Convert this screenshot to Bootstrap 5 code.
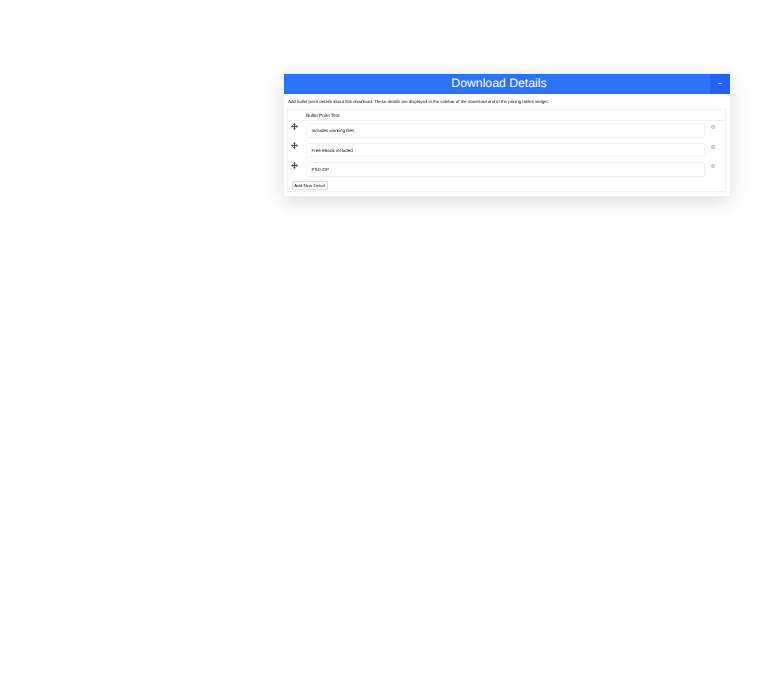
<!DOCTYPE html>
<html lang="en">
<head>
<meta charset="utf-8">
<title>Download Details</title>
<link href="https://cdn.jsdelivr.net/npm/bootstrap@5.3.0/dist/css/bootstrap.min.css" rel="stylesheet">
<style>
body { background:#fff; font-family:"Liberation Sans",Arial,sans-serif; color:#222; text-rendering:geometricPrecision; }
.dl-stage { padding:74px 0 0 284px; }
.dl-panel { width:446px; background:#fff; box-shadow:0 0 0 1px #f0f0f0, 0 5px 18px rgba(0,0,0,.15); }
.dl-head { height:20px; background:#2b73fb; color:#fff; }
.dl-title { font-size:12.25px; line-height:18px; padding-left:4px; }
.dl-toggle { width:20px; background:#2460f5; color:#fff; border:0; padding:0; font-size:8px; line-height:20px; border-radius:0; }
.dl-body { padding:5px 4px 4px 3px; filter:blur(.35px); }
.dl-note { font-size:4.37px; line-height:6px; margin:0 0 4px 1px; color:#111; }
.dl-table { border:1px solid #f1f1f1; padding-bottom:1px; }
.dl-th { font-size:4.7px; line-height:11px; padding-left:18px; border-bottom:1px solid #f1f1f1; height:11px; color:#111; }
.dl-row { height:19.5px; padding:2px 0 0 3px; }
.dl-grip { width:15px; flex:none; margin-top:-.5px; }
.dl-grip svg, .dl-x svg { display:block; }
.dl-input { width:399px; height:14.5px; border:1px solid #e9f1ff; border-radius:1.500px; font-size:4.5px; line-height:12px; padding:1.500px 4.500px 0; display:flex; align-items:center; color:#111; }
.dl-x { width:14px; flex:none; padding:2.300px 0 0 6px; }
.dl-add { font-size:4.4px; line-height:7px; width:36px; height:9px; padding:0; background:#f8f8f8; color:#222; border:1px solid #dcdcdc; border-radius:1px; margin:1.500px 0 0 3.500px; display:block; }
</style>
</head>
<body>
<div class="dl-stage min-vh-100">
<div class="dl-panel">
  <div class="dl-head d-flex justify-content-between">
    <div class="dl-title flex-grow-1 text-center">Download Details</div>
    <button class="dl-toggle btn" type="button">&minus;</button>
  </div>
  <div class="dl-body">
    <p class="dl-note">Add bullet point details about this download. These details are displayed in the sidebar of the download and in the pricing tables widget.</p>
    <div class="dl-table">
      <div class="dl-th">Bullet Point Text</div>
      <div class="dl-row d-flex">
        <span class="dl-grip"><svg width="7" height="7" viewBox="0 0 14 14"><path d="M7 0 10 3.200H8.200V5.800H10.800V4L14 7l-3.200 3V8.200H8.200v2.600H10L7 14l-3-3.200H5.800V8.200H3.200V10L0 7l3.200-3V5.800H5.800V3.200H4Z" fill="#45494d"/></svg></span>
        <div class="dl-input">Includes working files</div>
        <span class="dl-x"><svg width="4" height="4" viewBox="0 0 8 8"><circle cx="4" cy="4" r="4" fill="#bdbdbd"/><path d="M2.300 2.300l3.400 3.400M5.700 2.300 2.300 5.700" stroke="#fff"/></svg></span>
      </div>
      <div class="dl-row d-flex">
        <span class="dl-grip"><svg width="7" height="7" viewBox="0 0 14 14"><path d="M7 0 10 3.200H8.200V5.800H10.800V4L14 7l-3.200 3V8.200H8.200v2.600H10L7 14l-3-3.200H5.800V8.200H3.200V10L0 7l3.200-3V5.800H5.800V3.200H4Z" fill="#45494d"/></svg></span>
        <div class="dl-input">Free eBook included</div>
        <span class="dl-x"><svg width="4" height="4" viewBox="0 0 8 8"><circle cx="4" cy="4" r="4" fill="#bdbdbd"/><path d="M2.300 2.300l3.400 3.400M5.700 2.300 2.300 5.700" stroke="#fff"/></svg></span>
      </div>
      <div class="dl-row d-flex">
        <span class="dl-grip"><svg width="7" height="7" viewBox="0 0 14 14"><path d="M7 0 10 3.200H8.200V5.800H10.800V4L14 7l-3.200 3V8.200H8.200v2.600H10L7 14l-3-3.200H5.800V8.200H3.200V10L0 7l3.200-3V5.800H5.800V3.200H4Z" fill="#45494d"/></svg></span>
        <div class="dl-input">PSD,ZIP</div>
        <span class="dl-x"><svg width="4" height="4" viewBox="0 0 8 8"><circle cx="4" cy="4" r="4" fill="#bdbdbd"/><path d="M2.300 2.300l3.400 3.400M5.700 2.300 2.300 5.700" stroke="#fff"/></svg></span>
      </div>
      <button class="dl-add" type="button">Add New Detail</button>
    </div>
  </div>
</div>
</div>
<script src="https://cdn.jsdelivr.net/npm/bootstrap@5.3.0/dist/js/bootstrap.bundle.min.js"></script>
</body>
</html>
